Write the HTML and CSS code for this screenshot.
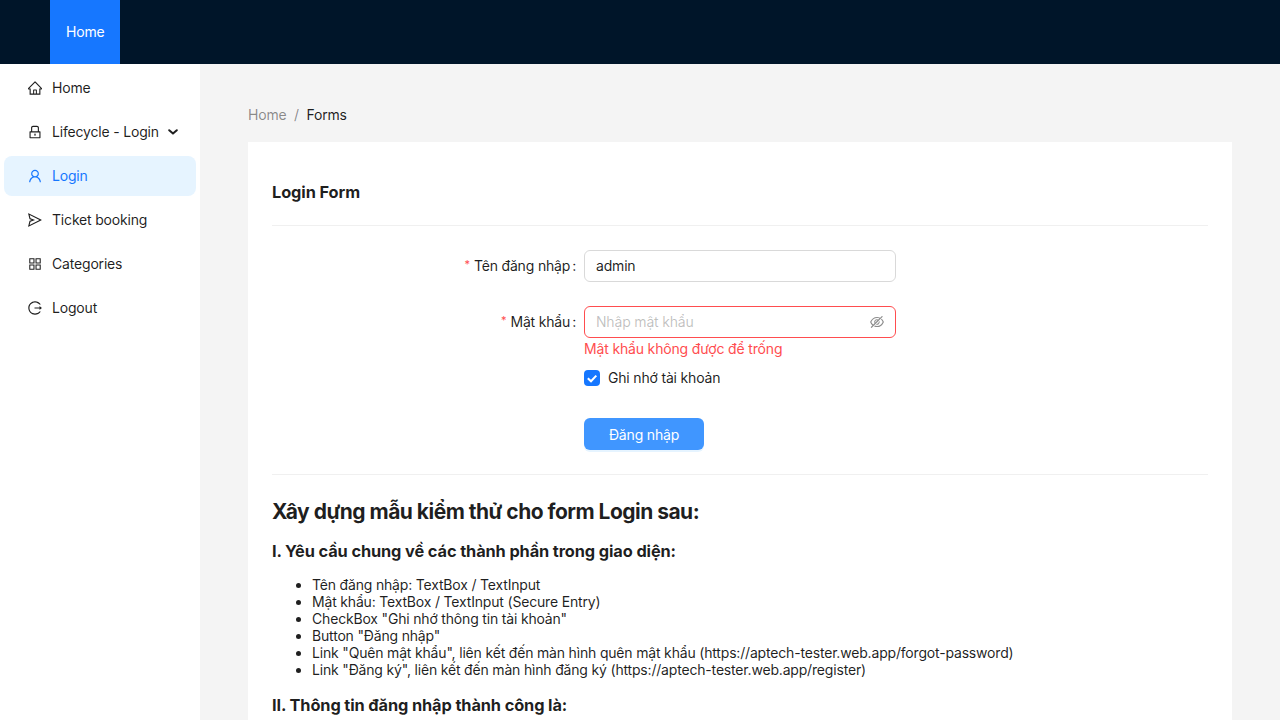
FILE: index.html
```html
<!DOCTYPE html>
<html lang="vi">
<head>
<meta charset="utf-8">
<title>Login Form</title>
<link rel="stylesheet" href="styles.css">
</head>
<body>
<header class="header"><a class="header-item">Home</a></header>
<div class="layout">
  <nav class="sider">
    <a class="menu-item"><svg class="icon" viewBox="64 64 896 896"><path d="M946.5 505L560.1 118.8l-25.9-25.9a31.5 31.5 0 00-44.4 0L77.5 505a63.9 63.9 0 00-18.8 46c.4 35.2 29.7 63.3 64.9 63.3h42.5V940h691.8V614.3h43.4c17.1 0 33.2-6.7 45.3-18.8a63.6 63.6 0 0018.7-45.3c0-17-6.7-33.1-18.8-45.2zM568 868H456V664h112v204zm217.9-325.7V868H632V640c0-22.1-17.9-40-40-40H432c-22.1 0-40 17.9-40 40v228H238.1V542.3h-96l370-369.7 23.1 23.1L882 542.3h-96.1z"/></svg><span>Home</span></a>
    <a class="menu-item"><svg class="icon" viewBox="64 64 896 896"><path d="M832 464h-68V240c0-70.7-57.3-128-128-128H388c-70.7 0-128 57.3-128 128v224h-68c-17.7 0-32 14.3-32 32v384c0 17.7 14.3 32 32 32h640c17.7 0 32-14.3 32-32V496c0-17.7-14.3-32-32-32zM332 240c0-30.9 25.1-56 56-56h248c30.9 0 56 25.1 56 56v224H332V240zm460 600H232V536h560v304zM484 701v53c0 4.4 3.6 8 8 8h40c4.4 0 8-3.6 8-8v-53a48.01 48.01 0 10-56 0z"/></svg><span>Lifecycle - Login</span><svg class="chevron" viewBox="0 0 10 6"><path d="M1.2 1.2L5 4.6 8.8 1.2"/></svg></a>
    <a class="menu-item menu-item-selected"><svg class="icon" viewBox="64 64 896 896"><path d="M858.5 763.6a374 374 0 00-80.6-119.5 375.63 375.63 0 00-119.5-80.6c-.4-.2-.8-.3-1.2-.5C719.5 518 760 444.7 760 362c0-137-111-248-248-248S264 225 264 362c0 82.7 40.5 156 102.8 201.1-.4.2-.8.3-1.2.5-44.8 18.9-85 46-119.5 80.6a375.63 375.63 0 00-80.6 119.5A371.7 371.7 0 00136 901.8a8 8 0 008 8.2h60c4.4 0 7.9-3.5 8-7.8 2-77.2 33-149.5 87.8-204.3 56.7-56.7 132-87.9 212.2-87.9s155.5 31.2 212.2 87.9C779 752.7 810 825 812 902.2c.1 4.4 3.6 7.8 8 7.8h60a8 8 0 008-8.2c-1-47.8-10.9-94.3-29.5-138.2zM512 534c-45.9 0-89.1-17.9-121.6-50.4S340 407.9 340 362c0-45.9 17.9-89.1 50.4-121.6S466.1 190 512 190s89.1 17.9 121.6 50.4S684 316.1 684 362c0 45.9-17.9 89.1-50.4 121.6S557.9 534 512 534z"/></svg><span>Login</span></a>
    <a class="menu-item"><svg class="icon" viewBox="64 64 896 896"><path d="M931.4 498.9L94.9 79.5c-3.4-1.7-7.3-2.1-11-1.2a15.99 15.99 0 00-11.7 19.3l86.2 352.2c1.3 5.3 5.2 9.6 10.4 11.3l147.7 50.7-147.6 50.7c-5.2 1.8-9.1 6-10.3 11.3L72.2 926.5c-.9 3.7-.5 7.6 1.2 10.9 3.9 7.9 13.5 11.1 21.5 7.2l836.5-417c3.1-1.5 5.6-4.1 7.2-7.1 3.9-8 .7-17.6-7.2-21.6zM170.8 826.3l50.3-205.6 295.2-101.3c2.3-.8 4.2-2.6 5-5 1.4-4.2-.8-8.7-5-10.2L221.1 403 171 198.2l628 314.9-628.2 313.2z"/></svg><span>Ticket booking</span></a>
    <a class="menu-item"><svg class="icon" viewBox="64 64 896 896"><path d="M464 144H160c-8.800 0-16 7.200-16 16v304c0 8.800 7.200 16 16 16h304c8.800 0 16-7.200 16-16V160c0-8.800-7.200-16-16-16zm-52 268H212V212h200v200zm452-268H560c-8.800 0-16 7.200-16 16v304c0 8.800 7.200 16 16 16h304c8.800 0 16-7.200 16-16V160c0-8.800-7.200-16-16-16zm-52 268H612V212h200v200zM464 544H160c-8.800 0-16 7.200-16 16v304c0 8.800 7.200 16 16 16h304c8.800 0 16-7.200 16-16V560c0-8.800-7.200-16-16-16zm-52 268H212V612h200v200zm452-268H560c-8.800 0-16 7.200-16 16v304c0 8.800 7.200 16 16 16h304c8.800 0 16-7.200 16-16V560c0-8.800-7.200-16-16-16zm-52 268H612V612h200v200z"/></svg><span>Categories</span></a>
    <a class="menu-item"><svg class="icon" viewBox="64 64 896 896"><path d="M868 732h-70.3c-4.800 0-9.300 2.100-12.300 5.800-7 8.500-14.500 16.700-22.400 24.500a353.840 353.840 0 01-112.700 75.900A352.800 352.800 0 01512.400 866c-47.900 0-94.300-9.400-137.900-27.800a353.840 353.840 0 01-112.700-75.900 353.280 353.280 0 01-76-112.500C167.300 606.200 158 559.900 158 512s9.400-94.200 27.800-137.800c17.800-42.100 43.400-80 76-112.500s70.500-58.100 112.700-75.900c43.600-18.400 90-27.800 137.900-27.800 47.900 0 94.300 9.300 137.900 27.800 42.200 17.800 80.100 43.400 112.700 75.900 7.900 7.900 15.300 16.100 22.400 24.500 3 3.700 7.600 5.800 12.300 5.800H868c6.300 0 10.200-7 6.700-12.300C798 160.500 663.800 81.600 511.300 82 271.700 82.600 79.600 277.100 82 516.400 84.400 751.900 276.200 942 512.400 942c152.100 0 285.700-78.800 362.300-197.700 3.400-5.300-.4-12.300-6.700-12.300zm88.900-226.300L815 393.700c-5.300-4.200-13-.4-13 6.300v76H488c-4.400 0-8 3.600-8 8v56c0 4.400 3.600 8 8 8h314v76c0 6.700 7.800 10.500 13 6.300l141.900-112a8 8 0 000-12.600z"/></svg><span>Logout</span></a>
  </nav>
  <main class="content">
    <div class="breadcrumb"><span>Home</span><span class="separator">/</span><span class="current">Forms</span></div>
    <section class="card">
      <h3 class="title form-title">Login Form</h3>
      <hr class="divider">
      <form class="form">
        <label class="label"><span class="required">*</span><span>Tên đăng nhập</span><span class="colon">:</span></label>
        <div class="input"><span>admin</span></div>
        <label class="label password-label"><span class="required">*</span><span>Mật khẩu</span><span class="colon">:</span></label>
        <div class="password-control">
          <div class="input input-error"><span class="placeholder">Nhập mật khẩu</span><svg class="icon eye" viewBox="64 64 896 896"><path d="M942.2 486.2Q889.47 375.11 816.7 305l-50.88 50.88C807.31 395.53 843.45 447.4 874.7 512 791.5 684.2 673.4 766 512 766q-72.67 0-133.87-22.38L323 798.75Q408 838 512 838q288.3 0 430.2-300.3a60.29 60.29 0 000-51.5zm-63.57-320.64L836 122.88a8 8 0 00-11.32 0L715.31 232.2Q624.86 186 512 186q-288.3 0-430.2 300.3a60.3 60.3 0 000 51.5q56.69 119.4 136.5 191.41L112.48 835a8 8 0 000 11.31L155.17 889a8 8 0 0011.31 0l712.15-712.12a8 8 0 000-11.32zM149.3 512C232.6 339.8 350.7 258 512 258c54.54 0 104.13 9.36 149.12 28.39l-70.3 70.3a176 176 0 00-238.13 238.13l-83.42 83.42C223.1 637.49 183.3 582.28 149.3 512zm246.7 0a112.11 112.11 0 01146.2-106.69L401.31 546.2A112 112 0 01396 512z"/><path d="M508 624c-3.46 0-6.87-.16-10.25-.47l-52.82 52.82a176.09 176.09 0 00227.42-227.42l-52.82 52.82c.31 3.38.47 6.790.47 10.250a111.940 111.940 0 01-112 112z"/></svg></div>
          <div class="error">Mật khẩu không được để trống</div>
        </div>
        <label class="remember"><span class="checkbox"><svg viewBox="0 0 16 16"><path d="M3.800 8.200L7 11.300 12.300 5.600"/></svg></span><span>Ghi nhớ tài khoản</span></label>
        <button class="submit" type="button">Đăng nhập</button>
      </form>
      <hr class="divider">
      <h2 class="title exercise-title">Xây dựng mẫu kiểm thử cho form Login sau:</h2>
      <h3 class="title section-title">I. Yêu cầu chung về các thành phần trong giao diện:</h3>
      <ul class="list">
        <li>Tên đăng nhập: TextBox / TextInput</li>
        <li>Mật khẩu: TextBox / TextInput (Secure Entry)</li>
        <li>CheckBox "Ghi nhớ thông tin tài khoản"</li>
        <li>Button "Đăng nhập"</li>
        <li>Link "Quên mật khẩu", liên kết đến màn hình quên mật khẩu (https://aptech-tester.web.app/forgot-password)</li>
        <li>Link "Đăng ký", liên kết đến màn hình đăng ký (https://aptech-tester.web.app/register)</li>
      </ul>
      <h3 class="title section-title">II. Thông tin đăng nhập thành công là:</h3>
    </section>
  </main>
</div>
</body>
</html>
```
FILE: styles.css
```css
* { box-sizing: border-box; }
body {
  margin: 0;
  height: 720px;
  overflow: hidden;
  display: flex;
  flex-direction: column;
  background: #f4f4f4;
  color: rgba(0, 0, 0, 0.88);
  font-family: Inter, "Liberation Sans", sans-serif;
  font-size: 14px;
  line-height: 22px;
  letter-spacing: -0.18px;
}
.header { flex: none; height: 64px; padding-left: 50px; display: flex; background: #001529; }
.header-item { width: 70px; padding: 0 16px; line-height: 64px; background: #1677ff; color: #fff; }
.layout { flex: 1; min-height: 0; display: flex; }
.sider { width: 200px; padding: 4px; display: flex; flex-direction: column; gap: 4px; background: #fff; }
.menu-item { height: 40px; padding-left: 24px; display: flex; align-items: center; border-radius: 8px; white-space: nowrap; }
.menu-item-selected { background: #e6f4ff; color: #1677ff; }
.icon { flex: none; width: 14px; height: 14px; margin-right: 10px; fill: currentColor; }
.chevron { width: 10px; height: 6px; margin: 0 0 1px 9px; fill: none; stroke: currentColor; stroke-width: 2; stroke-linecap: round; stroke-linejoin: round; }
.content { flex: 1; min-width: 0; padding: 40px 48px 0; overflow: hidden; }
.breadcrumb { display: flex; margin-bottom: 16px; color: rgba(0, 0, 0, 0.45); }
.separator { margin: 0 7.5px; }
.current { color: rgba(0, 0, 0, 0.88); }
.card { height: 578px; overflow: hidden; padding: 24px 24px 0; background: #fff; }
.title { margin: 0; font-weight: 700; }
.form-title { margin: 16px 0 22px; font-size: 16.38px; line-height: 21px; letter-spacing: -0.1px; }
.divider { height: 1px; margin: 0; border: 0; background: #f0f0f0; }
.form { display: grid; grid-template-columns: 304px 312px; column-gap: 8px; padding: 24px 0; }
.label { display: flex; justify-content: flex-end; height: 32px; line-height: 32px; margin-bottom: 24px; }
.required { margin-right: 4px; color: #ff4d4f; font-size: 11px; line-height: 29px; }
.colon { margin-left: 2px; }
.password-label { margin: 0; }
.input { height: 32px; padding: 0 11px; display: flex; align-items: center; justify-content: space-between; border: 1px solid #d9d9d9; border-radius: 6px; background: #fff; }
.input-error { border-color: #ff4d4f; }
.placeholder { color: rgba(0, 0, 0, 0.25); }
.eye { margin-right: 0; color: rgba(0, 0, 0, 0.45); }
.error { color: #ff4d4f; height: 24px; letter-spacing: -0.16px; }
.remember { grid-column: 2; display: flex; align-items: center; gap: 8px; height: 32px; margin-bottom: 24px; }
.checkbox { width: 16px; height: 16px; border-radius: 4px; background: #1677ff; }
.checkbox svg { display: block; fill: none; stroke: #fff; stroke-width: 2; }
.submit { grid-column: 2; width: 120px; height: 32px; padding: 2px 0 0; border: 0; border-radius: 6px; background: #4096ff; color: #fff; font: inherit; letter-spacing: inherit; box-shadow: 0 2px 0 rgba(5, 145, 255, 0.1); }
.exercise-title { margin: 24px 0 17px; font-size: 21px; line-height: 25px; letter-spacing: -0.52px; }
.section-title { font-size: 16.38px; line-height: 20px; letter-spacing: -0.12px; }
.list { margin: 15px 0 17px; padding-left: 40px; line-height: 17px; }
```
